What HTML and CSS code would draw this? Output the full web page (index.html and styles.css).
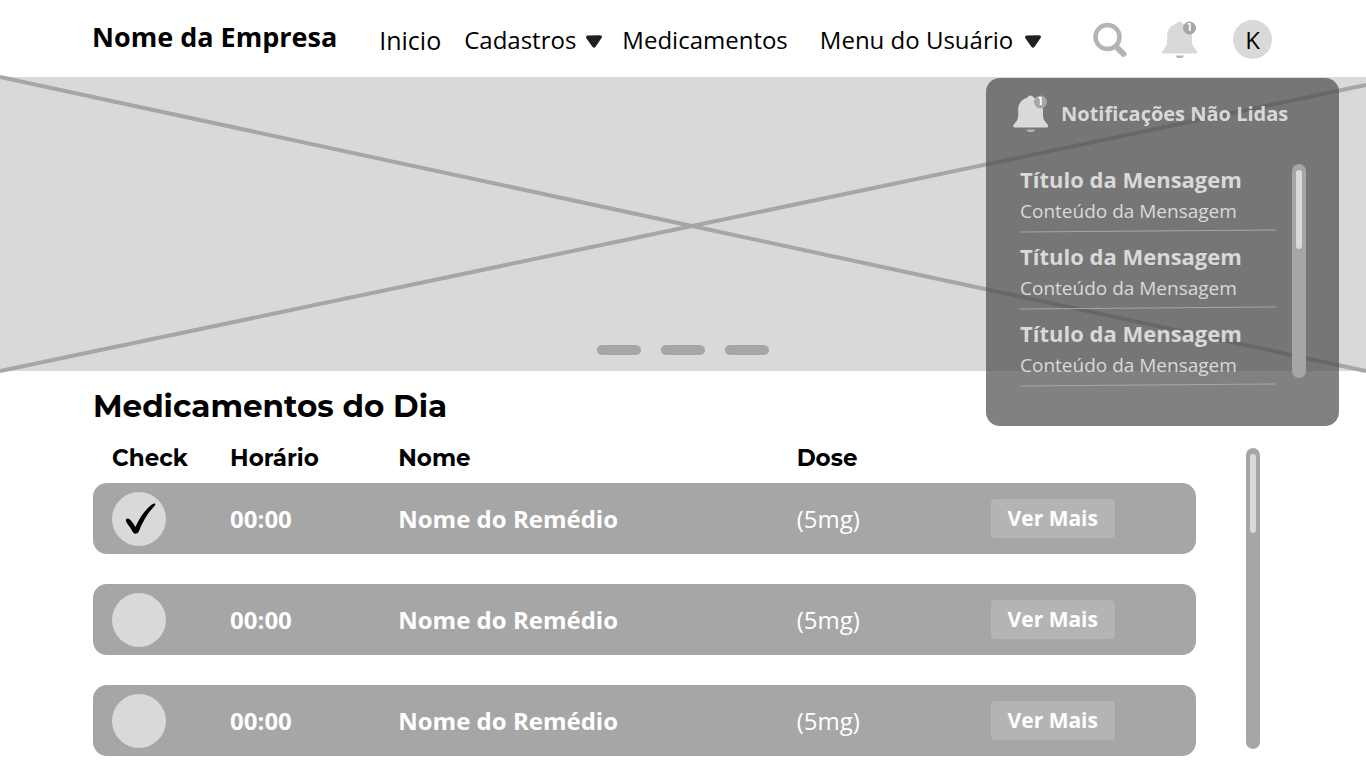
FILE: index.html
```html
<!DOCTYPE html>
<html lang="pt-BR">
<head>
<meta charset="utf-8">
<meta name="viewport" content="width=device-width, initial-scale=1">
<title>Nome da Empresa</title>
<link rel="stylesheet" href="styles.css">
</head>
<body>
<svg class="sprite" aria-hidden="true">
  <symbol id="bell" viewBox="0 0 36 40">
    <path fill="#d9d9d9" d="M14.500 3.500a3.200 3.200 0 0 1 6 0c5.500 1.500 9.500 6 9.500 12v5.500c0 4 1.500 6.200 4.300 9.200 1.300 1.300.9 3.300-1 3.300H2c-1.900 0-2.300-2-1-3.300 2.800-3 4.200-5.200 4.200-9.200v-5.500c0-6 3.800-10.500 9.300-12z"/>
    <path fill="#b4b4b4" d="M13.500 35.500h8.500a4.300 3 0 0 1-8.500 0z"/>
    <circle cx="27.500" cy="8" r="6.500" fill="#a6a6a6"/>
  </symbol>
  <symbol id="caret" viewBox="0 0 16 13">
    <path fill="#231f20" d="M2 .6 14 .2c1.800 0 2.500 1.500 1.500 2.900L9.600 11.700c-.9 1.300-2.300 1.300-3.200 0L.5 3.500C-.5 2 .2.600 2 .6z"/>
  </symbol>
</svg>

<header class="topbar">
  <a class="brand" href="#">Nome da Empresa</a>
  <nav class="menu">
    <a class="menu-item menu-home" href="#">Inicio</a>
    <button class="menu-item" type="button">Cadastros <svg class="caret" aria-hidden="true"><use href="#caret"/></svg></button>
    <a class="menu-item" href="#">Medicamentos</a>
    <button class="menu-item menu-user" type="button">Menu do Usuário <svg class="caret" aria-hidden="true"><use href="#caret"/></svg></button>
  </nav>
  <div class="tools">
    <button class="tool" type="button" aria-label="Buscar">
      <svg class="search" viewBox="0 0 34 36" fill="none" stroke="#b4b4b4" aria-hidden="true"><circle cx="14.500" cy="15" r="12" stroke-width="4.500"/><path d="M23.500 25 30.500 32" stroke-width="6" stroke-linecap="round"/></svg>
    </button>
    <button class="tool bell" type="button" aria-label="Notificações">
      <svg class="bell-icon" aria-hidden="true"><use href="#bell"/></svg><span class="count">1</span>
    </button>
    <button class="avatar" type="button">K</button>
  </div>
</header>

<main>
  <section class="banner">
    <svg class="banner-cross" viewBox="0 0 1366 294" preserveAspectRatio="none" aria-hidden="true">
      <path d="M0 0 692 149 1366 294M0 294 692 149 1366 8"/>
    </svg>
    <div class="dots">
      <button class="dot" type="button" aria-label="Slide 1"></button>
      <button class="dot" type="button" aria-label="Slide 2"></button>
      <button class="dot" type="button" aria-label="Slide 3"></button>
    </div>
    <aside class="panel">
      <header class="panel-head">
        <span class="bell"><svg class="bell-icon" aria-hidden="true"><use href="#bell"/></svg><span class="count">1</span></span>
        <h2 class="panel-title">Notificações Não Lidas</h2>
      </header>
      <div class="panel-body">
        <ul class="messages">
          <li class="message"><h3 class="message-title">Título da Mensagem</h3><p class="message-text">Conteúdo da Mensagem</p><svg class="rule" viewBox="0 0 255 4" preserveAspectRatio="none" aria-hidden="true"><path d="M0 3 255 1"/></svg></li>
          <li class="message"><h3 class="message-title">Título da Mensagem</h3><p class="message-text">Conteúdo da Mensagem</p><svg class="rule" viewBox="0 0 255 4" preserveAspectRatio="none" aria-hidden="true"><path d="M0 3 255 1"/></svg></li>
          <li class="message"><h3 class="message-title">Título da Mensagem</h3><p class="message-text">Conteúdo da Mensagem</p><svg class="rule" viewBox="0 0 255 4" preserveAspectRatio="none" aria-hidden="true"><path d="M0 3 255 1"/></svg></li>
        </ul>
        <div class="track"><div class="thumb"></div></div>
      </div>
    </aside>
  </section>

  <section class="meds">
    <h1 class="meds-title">Medicamentos do Dia</h1>
    <div class="meds-body">
      <table class="list">
        <thead>
          <tr class="row row-head"><th>Check</th><th>Horário</th><th>Nome</th><th>Dose</th><td></td></tr>
        </thead>
        <tbody class="rows">
          <tr class="row card"><td><input class="check" type="checkbox" aria-label="Tomado 1" checked></td><td class="strong">00:00</td><td class="strong">Nome do Remédio</td><td>(5mg)</td><td><button class="more" type="button">Ver Mais</button></td></tr>
          <tr class="row card"><td><input class="check" type="checkbox" aria-label="Tomado 2"></td><td class="strong">00:00</td><td class="strong">Nome do Remédio</td><td>(5mg)</td><td><button class="more" type="button">Ver Mais</button></td></tr>
          <tr class="row card"><td><input class="check" type="checkbox" aria-label="Tomado 3"></td><td class="strong">00:00</td><td class="strong">Nome do Remédio</td><td>(5mg)</td><td><button class="more" type="button">Ver Mais</button></td></tr>
        </tbody>
      </table>
      <div class="track"><div class="thumb"></div></div>
    </div>
  </section>
</main>
</body>
</html>
```
FILE: styles.css
```css
* { box-sizing: border-box; }
body {
  margin: 0;
  background: #fff;
  color: #000;
  font-family: "Open Sans", "Noto Sans", sans-serif;
}
h1, h2, h3, p, ul { margin: 0; padding: 0; }
ul { list-style: none; }
a { color: inherit; text-decoration: none; }
button {
  margin: 0;
  padding: 0;
  border: 0;
  background: none;
  color: inherit;
  font: inherit;
  cursor: pointer;
}
svg { display: block; }
.sprite { position: absolute; width: 0; height: 0; }

.topbar {
  display: flex;
  align-items: center;
  height: 77px;
  padding: 0 94px 0 92px;
}
.brand {
  padding-bottom: 4px;
  font-size: 27px;
  font-weight: 700;
  white-space: nowrap;
}
.menu {
  display: flex;
  gap: 20px;
  margin-left: 42px;
  padding-top: 2px;
}
.menu-item {
  display: flex;
  align-items: center;
  gap: 10px;
  font-size: 24px;
  line-height: 36px;
  white-space: nowrap;
}
.menu-home { margin-right: 3px; font-size: 25px; }
.menu-user { margin-left: 12px; gap: 12px; }
.caret { width: 16px; height: 13px; margin-top: 4px; }
.tools {
  display: flex;
  align-items: center;
  gap: 35px;
  margin-left: auto;
  padding-top: 2px;
}
.search { width: 34px; height: 36px; }
.bell { position: relative; display: block; }
.bell-icon { width: 36px; height: 40px; }
.count {
  position: absolute;
  top: 1px;
  left: 21px;
  width: 13px;
  color: #fff;
  font: 700 10px/14px Montserrat, sans-serif;
  text-align: center;
}
.avatar {
  width: 39px;
  height: 39px;
  border-radius: 50%;
  background: #d9d9d9;
  font-size: 24px;
  line-height: 39px;
}

.banner {
  position: relative;
  display: flex;
  flex-direction: column;
  justify-content: flex-end;
  height: 294px;
  background: #d9d9d9;
}
.banner-cross {
  position: absolute;
  inset: 0;
  width: 100%;
  height: 100%;
  overflow: visible;
  fill: none;
  stroke: #a6a6a6;
  stroke-width: 4px;
}
.dots {
  position: relative;
  display: flex;
  justify-content: center;
  gap: 20px;
  padding-bottom: 16px;
}
.dot {
  width: 44px;
  height: 10px;
  border-radius: 5px;
  background: #a6a6a6;
}

.panel {
  position: absolute;
  z-index: 1;
  top: 1px;
  right: 27px;
  width: 353px;
  height: 348px;
  padding: 16px 33px 0 27px;
  border-radius: 14px;
  background: rgba(78, 78, 78, 0.71);
  color: #d9d9d9;
}
.panel-head {
  display: flex;
  align-items: center;
  gap: 12px;
}
.panel-title {
  font-size: 20px;
  line-height: 40px;
  white-space: nowrap;
}
.panel-body {
  display: flex;
  gap: 16px;
  padding: 30px 0 0 7px;
}
.messages {
  display: flex;
  flex: 1;
  flex-direction: column;
  gap: 8px;
}
.message-title {
  font-size: 22px;
  line-height: 30px;
  white-space: nowrap;
}
.message-text {
  font-size: 19px;
  line-height: 35px;
  white-space: nowrap;
}
.rule {
  width: 100%;
  height: 4px;
  stroke: #a6a6a6;
  stroke-width: 1px;
}
.track {
  width: 14px;
  padding: 6px 4px;
  border-radius: 7px;
  background: #a6a6a6;
}
.thumb {
  height: 79px;
  border-radius: 3px;
  background: #d9d9d9;
}
.panel .track { height: 214px; }

.meds { padding: 14px 106px 11px 93px; }
.meds-title {
  font: 700 31px/42px Montserrat, Inter, sans-serif;
}
.meds-body {
  display: flex;
  gap: 50px;
  padding-top: 13px;
}
.meds-body .track { margin: 8px 0 7px; }
.list { display: block; flex: 1; }
.list thead { display: block; padding-bottom: 7px; }
.rows {
  display: flex;
  flex-direction: column;
  gap: 30px;
}
.row {
  display: grid;
  grid-template-columns: 118fr 168fr 398fr 194fr 205fr;
  align-items: center;
  padding-left: 19px;
}
.row th, .row td { padding: 0; text-align: left; }
.row-head th {
  font: 700 23px/36px Montserrat, Inter, sans-serif;
}
.card {
  height: 71px;
  border-radius: 14px;
  background: #a6a6a6;
  color: #fff;
  font-size: 24px;
}
.strong { font-weight: 700; }
.check {
  display: block;
  width: 54px;
  height: 54px;
  margin: 0;
  border-radius: 50%;
  appearance: none;
  background: #d9d9d9;
}
.check:checked::before {
  content: "";
  display: block;
  width: 54px;
  height: 54px;
  background: #000;
  clip-path: path("M14 28C16 24.500 20.500 30 23.500 35.500C27 27 33 18 40.500 12.500C43 11 44.500 12.500 42.500 14.500C36 21 30.500 30 27 39.500C25.500 43 22 43 20.500 40C18.500 35 13 30.500 14 28Z");
}
.more {
  display: block;
  width: 124px;
  height: 39px;
  border-radius: 4px;
  background: #b4b4b4;
  font-size: 21px;
  font-weight: 700;
  line-height: 39px;
}
```
